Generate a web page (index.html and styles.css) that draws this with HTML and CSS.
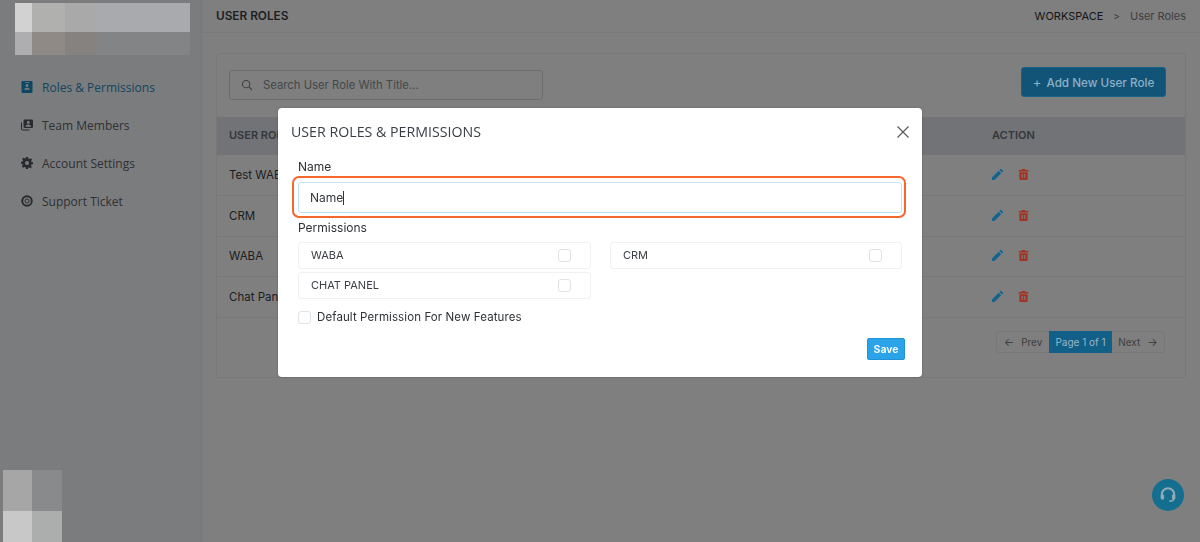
FILE: index.html
```html
<!DOCTYPE html>
<html lang="en">
<head>
<meta charset="utf-8">
<title>User Roles</title>
<link rel="stylesheet" href="styles.css">
</head>
<body>
<div class="app">
  <aside class="sidebar">
    <div class="logo">
      <i class="c c1"></i><i class="c c2"></i><i class="c c3"></i><i class="c c4"></i>
      <i class="c c5"></i><i class="c c6"></i><i class="c c7"></i><i class="c c8"></i>
    </div>
    <nav class="nav">
      <a class="nav-item active">
        <svg class="nav-icon" viewBox="0 0 12 12"><path fill="currentColor" fill-rule="evenodd" d="M1.5 0h9A1 1 0 0 1 11.500 1v10a1 1 0 0 1-1 1h-9a1 1 0 0 1-1-1V1a1 1 0 0 1 1-1zM6 3a1.500 1.500 0 1 0 0 3 1.500 1.500 0 0 0 0-3zM3.300 8.800h5.400C8.700 7.500 7.500 6.700 6 6.700s-2.700.8-2.700 2.100zM4 1.200v.7h4v-.7z"/></svg>
        <span>Roles &amp; Permissions</span>
      </a>
      <a class="nav-item">
        <svg class="nav-icon" viewBox="0 0 14 13"><path fill="currentColor" fill-rule="evenodd" d="M4.500 0h8A1.500 1.500 0 0 1 14 1.500v7a1.500 1.500 0 0 1-1.500 1.500h-8A1.500 1.500 0 0 1 3 8.500v-7A1.500 1.500 0 0 1 4.500 0zm4 1.800a1.700 1.700 0 1 0 0 3.400 1.700 1.700 0 0 0 0-3.400zM5.300 8.500h6.400c0-1.500-1.400-2.500-3.200-2.500s-3.200 1-3.200 2.500z"/><path fill="currentColor" d="M0 3.500h1.200v7.300c0 .6.400 1 1 1H10V13H2a2 2 0 0 1-2-2z"/></svg>
        <span>Team Members</span>
      </a>
      <a class="nav-item">
        <svg class="nav-icon" viewBox="0 0 24 24"><path fill="currentColor" fill-rule="evenodd" d="M10 0h4l.7 3.300 1.900.8 2.800-1.800 2.800 2.800-1.800 2.800.8 1.900L24 10.500v4l-3.300.7-.8 1.900 1.800 2.800-2.800 2.800-2.800-1.800-1.900.8L13.800 24h-4l-.7-3.300-1.900-.8-2.800 1.800-2.800-2.800 1.800-2.800-.8-1.900L0 13.500v-4l3.300-.7.800-1.900-1.800-2.800L5.100 1.300l2.800 1.800 1.400-.8zM12 8a4 4 0 1 0 0 8 4 4 0 0 0 0-8z"/></svg>
        <span>Account Settings</span>
      </a>
      <a class="nav-item">
        <svg class="nav-icon" viewBox="0 0 24 24"><circle cx="12" cy="12" r="9.500" fill="none" stroke="currentColor" stroke-width="4"/><circle cx="12" cy="12" r="4" fill="none" stroke="currentColor" stroke-width="2"/></svg>
        <span>Support Ticket</span>
      </a>
    </nav>
    <div class="logo-bottom">
      <i class="d d1"></i><i class="d d2"></i><i class="d d3"></i><i class="d d4"></i>
    </div>
  </aside>

  <main class="main">
    <header class="topbar">
      <h1 class="page-title">USER ROLES</h1>
      <div class="crumbs"><span class="crumb-root">WORKSPACE</span><span class="crumb-sep">&gt;</span><span class="crumb-leaf">User Roles</span></div>
    </header>
    <section class="card">
      <div class="toolbar">
        <div class="search">
          <svg class="search-icon" viewBox="0 0 14 14"><circle cx="6" cy="6" r="4.300" fill="none" stroke="currentColor" stroke-width="1.200"/><path d="M9.300 9.300L12.500 12.500" stroke="currentColor" stroke-width="1.200" stroke-linecap="round"/></svg>
          <span>Search User Role With Title...</span>
        </div>
        <button class="add-btn"><span class="plus">+</span> Add New User Role</button>
      </div>
      <table class="roles">
        <thead><tr><th>USER ROLE</th><th class="action-col">ACTION</th></tr></thead>
        <tbody>
          <tr><td>Test WABA</td><td class="action-col"><svg class="act edit" viewBox="0 0 12 12"><use href="#pencil"/></svg><svg class="act del" viewBox="0 0 12 12"><use href="#trash"/></svg></td></tr>
          <tr><td>CRM</td><td class="action-col"><svg class="act edit" viewBox="0 0 12 12"><use href="#pencil"/></svg><svg class="act del" viewBox="0 0 12 12"><use href="#trash"/></svg></td></tr>
          <tr><td>WABA</td><td class="action-col"><svg class="act edit" viewBox="0 0 12 12"><use href="#pencil"/></svg><svg class="act del" viewBox="0 0 12 12"><use href="#trash"/></svg></td></tr>
          <tr><td>Chat Panel</td><td class="action-col"><svg class="act edit" viewBox="0 0 12 12"><use href="#pencil"/></svg><svg class="act del" viewBox="0 0 12 12"><use href="#trash"/></svg></td></tr>
        </tbody>
      </table>
      <div class="pager-row">
        <div class="pager">
          <span class="pg"><span class="arrow">&#8592;</span>Prev</span>
          <span class="pg current">Page 1 of 1</span>
          <span class="pg">Next<span class="arrow">&#8594;</span></span>
        </div>
      </div>
    </section>
  </main>
</div>

<button class="help" aria-label="Help">
  <svg viewBox="0 0 16 16"><path d="M2.500 10V7.500a5.500 5.500 0 0 1 11 0V10" fill="none" stroke="currentColor" stroke-width="1.800"/><rect x="1.500" y="7.500" width="3" height="4.500" rx="1" fill="currentColor"/><rect x="11.500" y="7.500" width="3" height="4.500" rx="1" fill="currentColor"/><path d="M13 11.500c0 1.500-1.500 2-4 2" fill="none" stroke="currentColor" stroke-width="1.400"/></svg>
</button>

<div class="overlay">
  <div class="modal">
    <div class="modal-head">
      <h2 class="modal-title">USER ROLES &amp; PERMISSIONS</h2>
      <svg class="close" viewBox="0 0 12 12"><path d="M.5.500l11 11M11.500.500l-11 11" stroke="currentColor" stroke-width="1.100" fill="none"/></svg>
    </div>
    <div class="modal-body">
      <label class="label">Name</label>
      <div class="name-input">Name<span class="caret"></span></div>
      <label class="label perm-label">Permissions</label>
      <div class="perms">
        <div class="perm"><span>WABA</span><i class="check"></i></div>
        <div class="perm"><span>CRM</span><i class="check"></i></div>
        <div class="perm"><span>CHAT PANEL</span><i class="check"></i></div>
      </div>
      <div class="default-row"><i class="check"></i><span>Default Permission For New Features</span></div>
      <div class="modal-foot"><button class="save">Save</button></div>
    </div>
  </div>
</div>

<svg class="defs" aria-hidden="true">
  <symbol id="pencil" viewBox="0 0 12 12"><path fill="currentColor" d="M0 12V9.300L7.300 2l2.700 2.700L2.700 12zM8.100 1.200L9 .3a1 1 0 0 1 1.400 0l1.300 1.300a1 1 0 0 1 0 1.400l-.9.9z"/></symbol>
  <symbol id="trash" viewBox="0 0 12 12"><path fill="currentColor" fill-rule="evenodd" d="M4.200 0h3.600l.5 1.200H11.300v1.500H.7V1.200h3zM1.500 3.500h9V11a1 1 0 0 1-1 1h-7a1 1 0 0 1-1-1zM4 5.500v4h1.200v-4zm2.800 0v4H8v-4z"/></symbol>
</svg>
</body>
</html>
```
FILE: styles.css
```css
* { box-sizing: border-box; }
html, body { margin: 0; height: 100%; overflow: hidden; }
body { font-family: Inter, "Liberation Sans", sans-serif; font-size: 12px; color: #333; background: #fff; }
.defs { display: none; }

.app { display: flex; height: 542px; }

.sidebar { width: 202px; flex: none; display: flex; flex-direction: column; background: #f6f9fc; padding-top: 3px; border-right: 1px solid #eef0f3; }
.logo { position: relative; z-index: 20; margin-left: 15px; width: 175px; height: 52px; display: grid; grid-template-columns: 17px 33px 32px 93px; grid-template-rows: 29px 23px; }
.c { display: block; }
.c1 { background: #d2d2d2; }
.c2 { background: #b0b0ae; }
.c3 { background: #a9a9a9; }
.c4 { background: #a8aaad; }
.c5 { background: #aeadb0; }
.c6 { background: #8f8a86; }
.c7 { background: #85827f; }
.c8 { background: #828486; }

.nav { margin-top: 13px; display: flex; flex-direction: column; }
.nav-item { height: 38px; display: flex; align-items: center; padding-left: 21px; font-family: "Open Sans", sans-serif; font-size: 12px; color: #5f6368; }
.nav-item.active { color: #2a8bc0; }
.nav-icon { width: 12px; height: 12px; margin-right: 9px; flex: none; color: #52555a; }
.nav-item.active .nav-icon { color: #1b8ecb; }

.logo-bottom { position: relative; z-index: 20; margin-top: auto; margin-left: 3px; width: 59px; height: 72px; display: grid; grid-template-columns: 29px 30px; grid-template-rows: 41px 31px; }
.d { display: block; }
.d1 { background: #a6a6a6; }
.d2 { background: #898a8b; }
.d3 { background: #c8c8c8; }
.d4 { background: #abaead; }

.main { flex: 1; min-width: 0; display: flex; flex-direction: column; }
.topbar { height: 33px; flex: none; display: flex; align-items: center; justify-content: space-between; padding: 0 14px 1px 14px; border-bottom: 1px solid #f2f2f2; }
.page-title { margin: 0; font-size: 11.800px; font-weight: 600; color: #3b4046; }
.crumbs { display: flex; align-items: center; font-size: 11px; }
.crumb-root { color: #2b2f33; }
.crumb-sep { margin: 0 10px; color: #777; font-size: 10px; }
.crumb-leaf { color: #7b8088; }

.card { margin: 20px 14px 0; height: 325px; border: 1px solid #f0f1f3; border-radius: 3px; }
.toolbar { height: 63px; display: flex; justify-content: space-between; padding: 13px 19px 0 12px; }
.search { width: 314px; height: 30px; margin-top: 3px; border: 1px solid #d6d9de; border-radius: 3px; display: flex; align-items: center; padding-left: 11px; font-size: 11.300px; color: #8a8f96; }
.search-icon { width: 12px; height: 12px; margin-right: 10px; color: #777; }
.add-btn { position: relative; z-index: 20; width: 145px; height: 30px; border: 1px solid #176388; border-radius: 3px; background: #125478; color: #8db0c4; font: 500 11.700px Inter, sans-serif; padding: 0; }
.plus { font-weight: 400; margin-right: 2px; font-size: 13px; }

.roles { width: 100%; border-collapse: collapse; table-layout: fixed; }
.roles th { height: 37.500px; background: #e2e6ec; text-align: left; padding: 0 0 1px 12px; font-size: 11px; font-weight: 600; color: #6b7079; }
.roles td { height: 40.750px; padding: 0 0 0 12px; border-bottom: 1px solid #f0f0f0; font-size: 11.500px; color: #3a3d42; }
.action-col { width: 205px; }
.act { position: relative; z-index: 20; width: 11px; height: 11px; vertical-align: -1px; }
.edit { color: #12648e; margin-right: 15px; }
.del { color: #a33322; }

.pager-row { display: flex; justify-content: flex-end; padding: 13px 20px 0 0; }
.pager { display: flex; height: 22px; border: 1px solid #efefef; border-radius: 3px; font-size: 10px; color: #7d8085; }
.pg { display: flex; align-items: center; padding: 0 6px; width: 52px; justify-content: center; }
.pg.current { position: relative; z-index: 20; width: 63px; padding: 0; background: #125f88; color: #9ab7c8; margin: -1px 0; height: 22px; }
.arrow { margin: 0 7px 0 0; font-size: 11px; }
.pg:last-child .arrow { margin: 0 0 0 7px; }

.help { position: fixed; z-index: 20; left: 1152px; top: 479px; width: 32px; height: 32px; padding: 7px; border: 0; border-radius: 50%; background: #146e90; color: #93a9b3; }
.help svg { display: block; width: 18px; height: 18px; }

.overlay { position: fixed; inset: 0; z-index: 10; background: rgba(0,0,0,.5); display: flex; justify-content: center; align-items: flex-start; padding-top: 108px; }
.modal { width: 644px; height: 269px; background: #fff; border-radius: 4px; box-shadow: 0 0 3px rgba(0,0,0,.2); }
.modal-head { height: 46px; display: flex; align-items: center; justify-content: space-between; padding: 1px 13px 0 13px; }
.modal-title { margin: 0; font-family: "Open Sans", sans-serif; font-size: 14.200px; font-weight: 400; color: #3a3f45; }
.close { width: 12px; height: 12px; color: #555; }
.modal-body { padding: 5px 20px 0 20px; display: flex; flex-direction: column; }
.label { font-size: 12px; line-height: 15px; color: #2e3135; }
.name-input { position: relative; margin-top: 8px; height: 31px; border: 1px solid #bfe3f7; border-radius: 3px; display: flex; align-items: center; padding-left: 11px; font-size: 12px; color: #33373c; }
.name-input::after { content: ""; position: absolute; left: -7px; right: -5px; top: -7px; bottom: -6px; border: 2px solid #f4682c; border-radius: 7px; }
.caret { width: 1px; height: 14px; background: #333; margin-left: 0; }
.perm-label { margin-top: 7px; }
.perms { margin-top: 7px; display: grid; grid-template-columns: 293px 292px; column-gap: 19px; row-gap: 3px; }
.perm { height: 27px; border: 1px solid #f0f1f3; border-radius: 3px; display: flex; align-items: center; justify-content: space-between; padding: 0 19px 0 12px; font-size: 11px; color: #3c4046; }
.perm span { margin-bottom: 2px; }
.check { display: block; width: 13px; height: 13px; border: 1px solid #dfe2e6; border-radius: 3px; background: #fff; flex: none; }
.default-row { margin-top: 11px; display: flex; align-items: center; gap: 6px; font-size: 11.500px; letter-spacing: .1px; color: #2e3135; }
.modal-foot { display: flex; justify-content: flex-end; margin-top: 14px; margin-right: -3px; }
.save { width: 38px; height: 22px; padding: 0; border: 1px solid #1f93d6; border-radius: 2px; background: #2aa3e8; color: #fff; font: 600 10.500px Inter, sans-serif; }
```
